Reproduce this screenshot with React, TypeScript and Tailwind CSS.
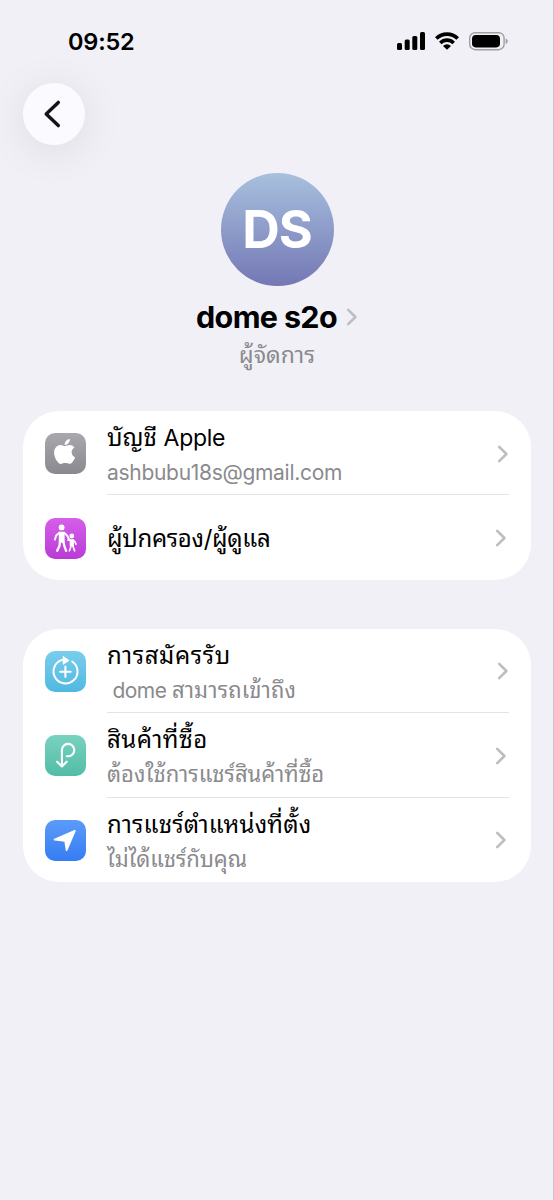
import type { ReactNode } from 'react';

interface RowProps {
  icon: ReactNode;
  title: ReactNode;
  subtitle?: ReactNode;
  inset?: boolean;
  last?: boolean;
}

function Chevron({ className }: { className?: string }) {
  return (
    <svg className={className} width="12" height="20" viewBox="0 0 12 20" fill="none">
      <path
        d="M2.2 2.9 9.4 10 2.2 17.1"
        stroke="#bdbdc2"
        strokeWidth="2.6"
        strokeLinecap="round"
        strokeLinejoin="round"
      />
    </svg>
  );
}

function IconTile({ className, children }: { className: string; children: ReactNode }) {
  return (
    <div className={`h-[41px] w-[41px] shrink-0 overflow-hidden rounded-[10px] bg-linear-to-b ${className}`}>
      <svg width="41" height="41" viewBox="0 0 41 41" fill="none">
        {children}
      </svg>
    </div>
  );
}

function Row({ icon, title, subtitle, inset, last }: RowProps) {
  return (
    <div className="flex h-[84.4px] pl-[22px] pr-[22px]">
      <div className="flex w-[62px] shrink-0 items-center pt-px">{icon}</div>
      <div className={`flex flex-1 items-center border-b-[1.5px] pt-[2px] ${last ? 'border-transparent' : 'border-[#e3e3e5]'}`}>
        <div className={`flex-1 whitespace-pre ${subtitle ? 'pt-[3px]' : 'pt-[3px]'}`}>
          <div className="h-[34px] text-[24px] leading-[32px] text-black">{title}</div>
          {subtitle && (
            <div className="h-[32px] text-[22px] leading-[32px] text-[#8a8a8e]">{subtitle}</div>
          )}
        </div>
        <Chevron className={inset ? 'mr-[2.5px]' : 'mr-0'} />
      </div>
    </div>
  );
}

function StatusBar() {
  return (
    <div className="flex h-[82px] items-start justify-between pl-[68px] pr-[46px] pt-[26px]">
      <span className="text-[23.5px] font-semibold leading-[31px] tracking-[-0.2px] text-black">09:52</span>
      <svg className="mt-[4px]" width="111" height="22" viewBox="0 0 111 22" fill="none">
        <g fill="#000">
          <rect x="0" y="13" width="5" height="7" rx="1.5" />
          <rect x="7.7" y="9.6" width="5" height="10.4" rx="1.5" />
          <rect x="15.3" y="6" width="5" height="14" rx="1.5" />
          <rect x="23" y="2" width="5" height="18" rx="1.5" />
        </g>
        <g stroke="#000" strokeWidth="3.6">
          <path d="M39.3 8.6a15 15 0 0 1 21.4 0" />
          <path d="M43.3 12.9a9.4 9.4 0 0 1 13.4 0" />
        </g>
        <path d="M50 19.8 46 16a5.6 5.6 0 0 1 8 0Z" fill="#000" />
        <rect x="72.7" y="2.7" width="34.4" height="17" rx="5.4" stroke="#a0a0a4" strokeWidth="1.4" />
        <rect x="75" y="5" width="28" height="12.4" rx="3.8" fill="#000" />
        <path d="M108.6 8.4c1.6.6 2.2 1.6 2.2 2.8s-.6 2.2-2.2 2.8z" fill="#a0a0a4" />
      </svg>
    </div>
  );
}

const appleIcon = (
  <IconTile className="from-[#a9a8ad] to-[#8a898f]">
    <path
      d="M17.05 20.28c-.98.95-2.05.8-3.08.35-1.09-.46-2.09-.48-3.24 0-1.44.62-2.2.44-3.06-.35C2.79 15.25 3.51 7.59 9.05 7.31c1.35.07 2.29.74 3.08.8 1.18-.24 2.31-.93 3.57-.84 1.51.12 2.65.72 3.4 1.8-3.12 1.87-2.38 5.98.48 7.13-.57 1.5-1.31 2.99-2.54 4.09zM12.03 7.25c-.15-2.23 1.66-4.07 3.74-4.25.29 2.58-2.34 4.5-3.74 4.25z"
      transform="translate(3.1 1.9) scale(1.38)"
      fill="#fff"
    />
  </IconTile>
);

const guardianIcon = (
  <IconTile className="from-[#d65eea] to-[#b93bd6]">
    <g fill="#fff">
      <circle cx="16.6" cy="9.4" r="2.9" />
      <circle cx="26.8" cy="18" r="2.4" />
    </g>
    <g stroke="#fff" strokeLinecap="round" strokeLinejoin="round">
      <path d="M15.1 15h3.2v8.4h-3.2z" strokeWidth="2.6" fill="#fff" />
      <path d="M14.6 14.6 11.2 17.4 9.9 21.6M19 14.6l3.3 3.2 1.6 3.2" strokeWidth="1.9" />
      <path d="M15 23.4 14.4 28 12.2 32.8M18.4 23.4l.9 4.4 1.8 5" strokeWidth="2.3" />
      <path d="M25.7 22.3h2.2v4.9h-2.2z" strokeWidth="2" fill="#fff" />
      <path d="M25.4 22.2 22.9 22M28.2 22.2l2 2 .8 2.1M25.9 27.2l-.3 2.6-1.2 3M27.7 27.2l.8 2.6 1.1 3" strokeWidth="1.7" />
    </g>
  </IconTile>
);

const subscriptionsIcon = (
  <IconTile className="from-[#79cdec] to-[#4fb9e1]">
    <g stroke="#fff" strokeWidth="2" strokeLinecap="round">
      <path d="M27.2 10.5A12 12 0 1 1 17.3 8.9" />
      <path d="M20.4 15.4v10.6M15.1 20.7h10.6" />
    </g>
    <path d="M18 5.2 24.2 9.4 18 13.5Z" fill="#fff" stroke="#fff" strokeWidth=".6" strokeLinejoin="round" />
  </IconTile>
);

const purchasesIcon = (
  <IconTile className="from-[#78d2c0] to-[#51bda6]">
    <path
      d="M16.9 31V15.2A6.2 6.2 0 1 1 23.1 21.3H21.8M12.1 26.7 16.9 31.4 21.7 26.7"
      stroke="#fff"
      strokeWidth="2.1"
      strokeLinecap="round"
      strokeLinejoin="round"
    />
  </IconTile>
);

const locationIcon = (
  <IconTile className="from-[#5b9bf8] to-[#367cf4]">
    <path
      d="M29.8 10.8 21.6 30.1 20.2 20.9 9.6 19.6Z"
      fill="#fff"
      stroke="#fff"
      strokeWidth="1.8"
      strokeLinejoin="round"
    />
  </IconTile>
);

export default function App() {
  return (
    <div className="relative h-[1200px] w-[554px] overflow-hidden bg-[#f1f0f6] font-['Inter','Noto_Sans_Thai_Looped','Noto_Sans_Thai','Noto_Sans',sans-serif]">
      <div className="absolute inset-y-0 right-0 w-px bg-[#c5c5c9]" />
      <StatusBar />

      <button
        aria-label="ย้อนกลับ"
        className="ml-[23px] mt-px flex h-[62px] w-[62px] items-center justify-center rounded-full bg-[#fbfbff] shadow-[0_6px_44px_rgba(0,0,0,0.09)]"
      >
        <svg className="mr-[5px]" width="18" height="30" viewBox="0 0 18 30" fill="none">
          <path d="M15.3 3.4 3.2 15l12.1 11.6" stroke="#141418" strokeWidth="3.4" strokeLinecap="round" strokeLinejoin="round" />
        </svg>
      </button>

      {/* Profile */}
      <div className="mt-[28px] flex flex-col items-center">
        <div className="flex h-[113px] w-[113px] items-center justify-center rounded-full bg-linear-to-b from-[#a8c0de] to-[#7478b4]">
          <span className="text-[52px] font-bold leading-none tracking-[-1px] text-white">DS</span>
        </div>
        <div className="mt-[10px] flex h-[42px] items-center">
          <span className="text-[30.5px] font-bold leading-[42px] tracking-[-0.65px] text-black">dome s2o</span>
          <Chevron className="ml-[9px]" />
        </div>
        <div className="h-[32px] text-[23px] leading-[34px] text-[#8a8a8e]">ผู้จัดการ</div>
      </div>

      <div className="ml-[23px] mt-[41px] w-[508px] rounded-[36px] bg-white">
        <Row
          icon={appleIcon}
          title={<>บัญชี <span className="text-[23px] tracking-[-0.3px]">Apple</span></>}
          subtitle={<span className="text-[21px] tracking-[-0.3px]">ashbubu18s@gmail.com</span>}
        />
        <Row
          icon={guardianIcon}
          title={<span className="tracking-[-0.3px]">ผู้ปกครอง/ผู้ดูแล</span>}
          inset
          last
        />
      </div>

      <div className="ml-[23px] mt-[49px] w-[508px] rounded-[36px] bg-white">
        <Row
          icon={subscriptionsIcon}
          title={<span className="tracking-[0.6px]">การสมัครรับ</span>}
          subtitle={<><span className="text-[21px] tracking-[-0.5px]"> dome </span><span className="tracking-[0.15px]">สามารถเข้าถึง</span></>}
        />
        <Row
          icon={purchasesIcon}
          title={<span className="tracking-[0.5px]">สินค้าที่ซื้อ</span>}
          subtitle={<span className="tracking-[0px]">ต้องใช้การแชร์สินค้าที่ซื้อ</span>}
          inset
        />
        <Row
          icon={locationIcon}
          title={<span className="tracking-[0.2px]">การแชร์ตำแหน่งที่ตั้ง</span>}
          subtitle={<span className="tracking-[-0.1px]">ไม่ได้แชร์กับคุณ</span>}
          inset
          last
        />
      </div>
    </div>
  );
}
